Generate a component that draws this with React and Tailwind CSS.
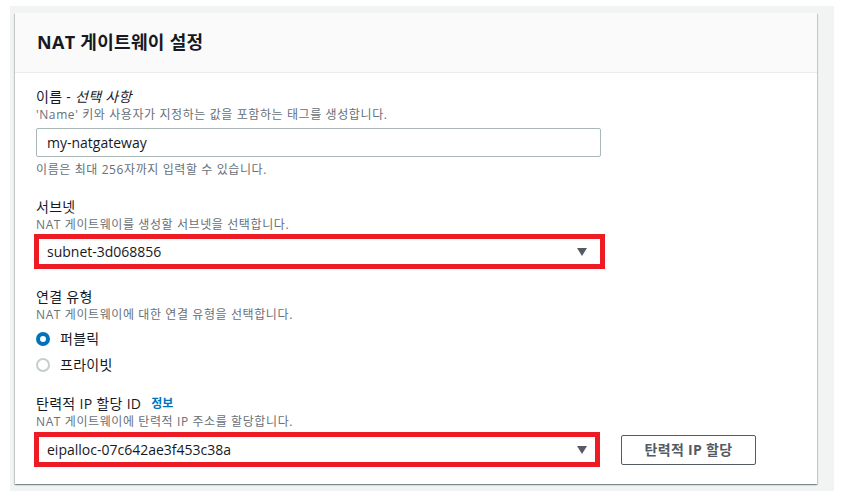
// NAT 게이트웨이 설정 폼 카드.
const FONT = "font-['Open_Sans','Noto_Sans_CJK_KR',sans-serif]";

function Caret() {
  return (
    <svg width="10" height="8" viewBox="0 0 10 8" className="shrink-0" aria-hidden>
      <path d="M0 0 H10 L5 8 Z" fill="#545b64" />
    </svg>
  );
}

function FieldLabel({ children }) {
  return <div className="text-[14px] leading-[20px] tracking-[0.3px] text-[#16191f]">{children}</div>;
}

function FieldDesc({ children }) {
  return <div className="text-[12px] leading-[16px] tracking-[0.6px] text-[#687078]">{children}</div>;
}

function Radio({ checked, label }) {
  return (
    <label className="flex h-[25px] items-center gap-[10px]">
      {checked ? (
        <span className="flex h-[14px] w-[14px] items-center justify-center rounded-full bg-[#0073bb]">
          <span className="h-[6px] w-[6px] rounded-full bg-white" />
        </span>
      ) : (
        <span className="h-[14px] w-[14px] rounded-full border-2 border-[#c6cdce] bg-white" />
      )}
      <span className="text-[14px] tracking-[0.3px] text-[#16191f]">{label}</span>
    </label>
  );
}

export default function App() {
  return (
    <div className={`min-h-[496px] bg-white pl-[10px] pt-[6px] ${FONT}`}>
      <div className="w-[824px] bg-[#f2f3f3] pb-[7px] pl-[5px] pt-[7px]">
        <div className="w-[802px] bg-white shadow-[0_1px_1px_0_rgba(0,28,36,0.3),1px_1px_1px_0_rgba(0,28,36,0.15),-1px_1px_1px_0_rgba(0,28,36,0.15)]">
          <div className="flex h-[60px] items-center border-b border-[#eaeded] bg-[#fafafa] pl-[22px]">
            <h2 className="text-[18px] font-bold tracking-[0.3px] text-[#16191f]">NAT 게이트웨이 설정</h2>
          </div>

          <div className="px-[21px] pb-[17px] pt-[14px]">
            <FieldLabel>
              이름 - <i>선택 사항</i>
            </FieldLabel>
            <FieldDesc>'Name' 키와 사용자가 지정하는 값을 포함하는 태그를 생성합니다.</FieldDesc>
            <div className="mt-[5px] flex h-[29px] w-[565px] items-center rounded-[2px] border border-[#aab7b8] pl-[10px] text-[14px] text-[#16191f]">
              my-natgateway
            </div>
            <div className="mt-[5px]">
              <FieldDesc>이름은 최대 256자까지 입력할 수 있습니다.</FieldDesc>
            </div>

            <div className="mt-[19px]">
              <FieldLabel>서브넷</FieldLabel>
            </div>
            <FieldDesc>NAT 게이트웨이를 생성할 서브넷을 선택합니다.</FieldDesc>
            <div className="-ml-[2px] mt-[1px] flex h-[35px] w-[571px] items-center justify-between border-[5px] border-[#ed1c24] pl-[8px] pr-[13px] text-[14px] text-[#16191f]">
              <span>subnet-3d068856</span>
              <Caret />
            </div>

            <div className="mt-[18px]">
              <FieldLabel>연결 유형</FieldLabel>
            </div>
            <FieldDesc>NAT 게이트웨이에 대한 연결 유형을 선택합니다.</FieldDesc>
            <div className="mt-[3px] flex flex-col gap-[1px]">
              <Radio checked label="퍼블릭" />
              <Radio label="프라이빗" />
            </div>

            <div className="mt-[17px] flex items-center gap-[10px]">
              <FieldLabel>탄력적 IP 할당 ID</FieldLabel>
              <span className="text-[12px] font-bold text-[#0073bb]">정보</span>
            </div>
            <FieldDesc>NAT 게이트웨이에 탄력적 IP 주소를 할당합니다.</FieldDesc>
            <div className="-ml-[2px] mt-[2px] flex items-center gap-[21px]">
              <div className="flex h-[35px] w-[566px] items-center justify-between border-[5px] border-[#ed1c24] pl-[8px] pr-[8px] text-[14px] text-[#16191f]">
                <span>eipalloc-07c642ae3f453c38a</span>
                <Caret />
              </div>
              <button
                type="button"
                className="flex h-[30px] w-[135px] items-center justify-center rounded-[2px] border border-[#545b64] bg-white text-[14px] font-bold tracking-[0.3px] text-[#545b64]"
              >
                탄력적 IP 할당
              </button>
            </div>
          </div>
        </div>
      </div>
    </div>
  );
}
